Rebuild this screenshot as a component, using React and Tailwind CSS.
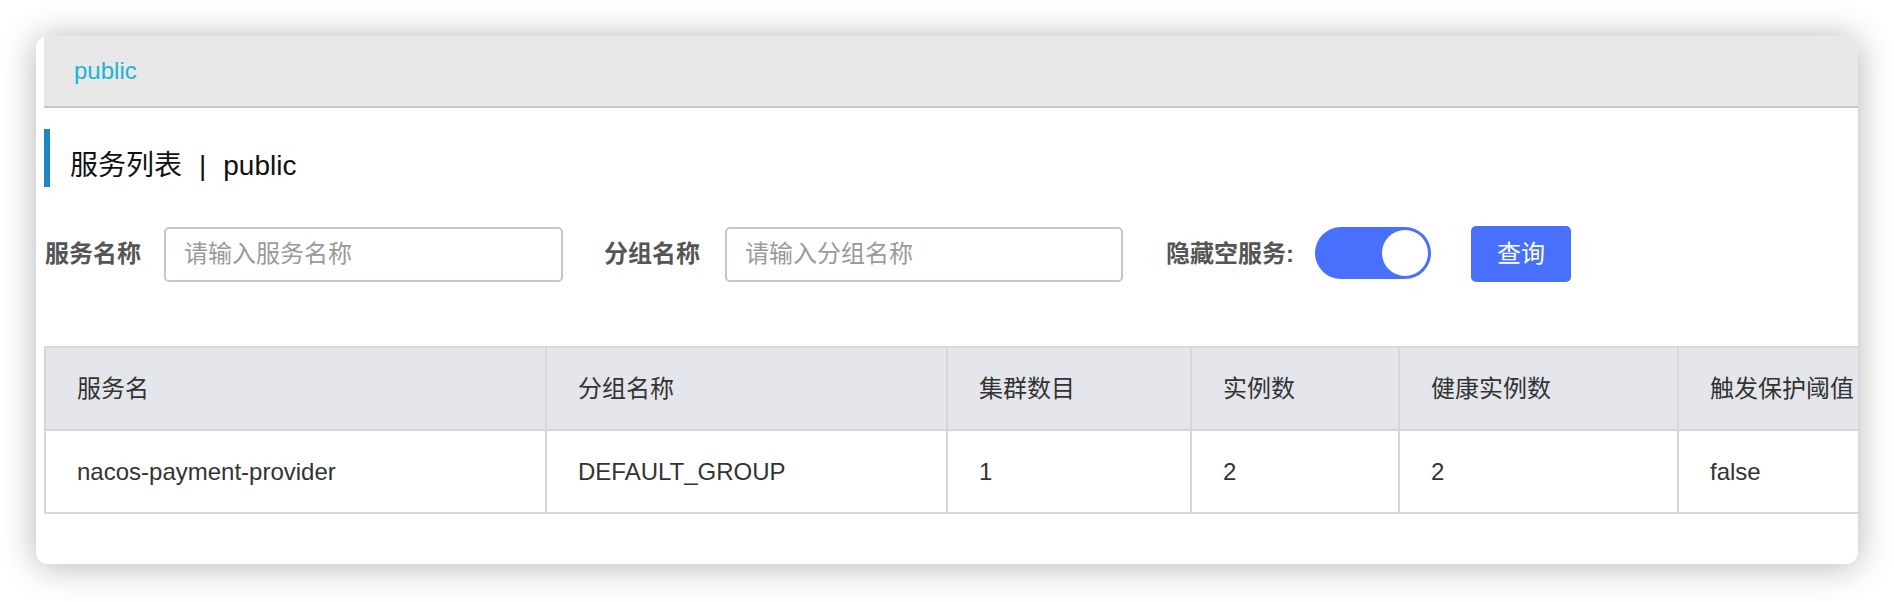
export default function App() {
  const font = { fontFamily: '"Liberation Sans", "Noto Sans CJK SC", sans-serif' };
  const cols = [
    { h: "服务名", v: "nacos-payment-provider", w: "w-[501px]" },
    { h: "分组名称", v: "DEFAULT_GROUP", w: "w-[401px]" },
    { h: "集群数目", v: "1", w: "w-[244px]" },
    { h: "实例数", v: "2", w: "w-[208px]" },
    { h: "健康实例数", v: "2", w: "w-[279px]" },
    { h: "触发保护阈值", v: "false", w: "w-[260px]" },
  ];
  return (
    <div className="w-[1894px] h-[602px] bg-white pt-[36px] pl-[36px] overflow-hidden" style={font}>
      <div className="w-[1822px] h-[528px] rounded-[12px] overflow-hidden bg-white shadow-[0_2px_34px_rgba(0,0,0,0.3)] pl-[8px]">
        <div className="flex flex-col">
          {/* header */}
          <div className="h-[72px] bg-[#e8e8e8] border-b-2 border-[#c6c6c6] flex items-center pl-[30px]">
            <span className="text-[24px] text-[#22b2d8] leading-none">public</span>
          </div>
          {/* title */}
          <div className="mt-[21px] flex h-[58px]">
            <div className="w-[6px] h-[58px] bg-[#1a87c2]"></div>
            <div className="flex items-center pt-[15px] pl-[20px] text-[28px] text-[#111] leading-none">
              <span>服务列表</span>
              <span className="mx-[17px]">|</span>
              <span>public</span>
            </div>
          </div>
          {/* form */}
          <div className="mt-[39px] flex items-center h-[56px] pl-[1px]">
            <span className="text-[24px] font-bold text-[#555] leading-none">服务名称</span>
            <div className="ml-[23px] w-[399px] h-[55px] border-2 border-[#c4c6cf] rounded-[5px] flex items-center pl-[18px] text-[24px] text-[#9a9a9a]">
              请输入服务名称
            </div>
            <span className="ml-[41px] text-[24px] font-bold text-[#555] leading-none">分组名称</span>
            <div className="ml-[25px] w-[398px] h-[55px] border-2 border-[#c4c6cf] rounded-[5px] flex items-center pl-[18px] text-[24px] text-[#9a9a9a]">
              请输入分组名称
            </div>
            <span className="ml-[43px] text-[24px] font-bold text-[#555] leading-none">隐藏空服务:</span>
            <div className="ml-[21px] w-[116px] h-[52px] rounded-full bg-[#4870fd] relative -translate-y-[1px]">
              <div className="absolute right-[1px] top-[1px] w-[50px] h-[50px] rounded-full bg-white border-2 border-[#4870fd]"></div>
            </div>
            <div className="ml-[40px] w-[100px] h-[56px] rounded-[5px] bg-[#4870fd] flex items-center justify-center text-white text-[24px]">
              查询
            </div>
          </div>
          {/* table */}
          <div className="mt-[64px] w-max border-2 border-[#d6d7dc] border-r-0">
            <div className="flex bg-[#e5e6eb] border-b-2 border-[#d6d7dc]">
              {cols.map((c, i) => (
                <div key={i} className={`${c.w} h-[81px] flex items-center pl-[31px] border-r-2 border-[#d6d7dc] text-[24px] text-[#333] shrink-0`}>
                  {c.h}
                </div>
              ))}
            </div>
            <div className="flex bg-white">
              {cols.map((c, i) => (
                <div key={i} className={`${c.w} h-[81px] flex items-center pl-[31px] border-r-2 border-[#d6d7dc] text-[24px] text-[#333] shrink-0`}>
                  {c.v}
                </div>
              ))}
            </div>
          </div>
        </div>
      </div>
    </div>
  );
}
